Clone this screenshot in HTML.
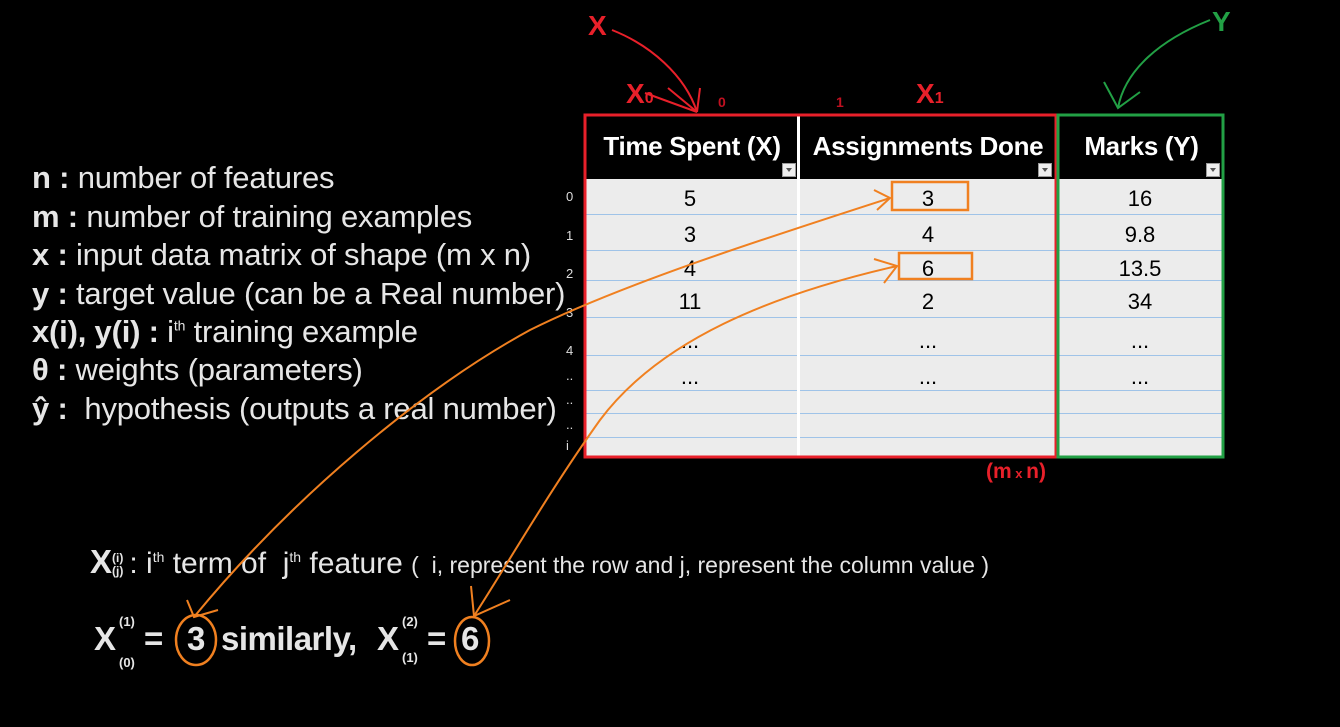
<!DOCTYPE html>
<html><head><meta charset="utf-8"><style>
body{margin:0;width:1340px;height:727px;background:#000;position:relative;overflow:hidden;font-family:"Liberation Sans",sans-serif;}
.a{position:absolute;white-space:nowrap}
.def{color:#e6e6e6;font-size:31px;left:32px;letter-spacing:-0.2px}
.def b{font-weight:bold}
.cell{position:absolute;font-size:22px;color:#000;text-align:center;font-family:"Liberation Sans",sans-serif}
.hd{position:absolute;color:#fff;font-weight:bold;font-size:26px;font-family:"Liberation Sans",sans-serif;text-align:center;letter-spacing:-0.3px}
.rn{position:absolute;left:566px;color:#ddd;font-size:13px}
.dd{position:absolute;width:14px;height:14px;background:#eee;border:1px solid #999;box-sizing:border-box}
.dd:after{content:"";position:absolute;left:3px;top:4px;border-left:3px solid transparent;border-right:3px solid transparent;border-top:4px solid #555}
</style></head><body>
<div class="a" style="left:586px;top:179px;width:637px;height:278px;background:#ececec"></div>
<div class="a" style="left:586px;top:116px;width:637px;height:63px;background:#000"></div>
<svg class="a" style="left:0;top:0" width="1340" height="727">
<g stroke="#9fc3e8" stroke-width="1">
<line x1="586" y1="214.5" x2="1223" y2="214.5"/><line x1="586" y1="250.5" x2="1223" y2="250.5"/>
<line x1="586" y1="280.5" x2="1223" y2="280.5"/><line x1="586" y1="317.5" x2="1223" y2="317.5"/>
<line x1="586" y1="355.5" x2="1223" y2="355.5"/><line x1="586" y1="390.5" x2="1223" y2="390.5"/>
<line x1="586" y1="413.5" x2="1223" y2="413.5"/><line x1="586" y1="437.5" x2="1223" y2="437.5"/>
</g>
<line x1="798.5" y1="116" x2="798.5" y2="457" stroke="#fff" stroke-width="3"/>
<rect x="585" y="115" width="471" height="342" fill="none" stroke="#e8202a" stroke-width="3"/>
<rect x="1058" y="115" width="165" height="342" fill="none" stroke="#22a045" stroke-width="3"/>
</svg>
<div class="hd" style="left:586px;top:131px;width:212px">Time Spent (X)</div>
<div class="hd" style="left:800px;top:131px;width:256px">Assignments Done</div>
<div class="hd" style="left:1060px;top:131px;width:163px">Marks (Y)</div>
<div class="dd" style="left:782px;top:163px"></div>
<div class="dd" style="left:1038px;top:163px"></div>
<div class="dd" style="left:1206px;top:163px"></div>

<div class="cell" style="left:590px;top:186px;width:200px">5</div>
<div class="cell" style="left:590px;top:222px;width:200px">3</div>
<div class="cell" style="left:590px;top:256px;width:200px">4</div>
<div class="cell" style="left:590px;top:289px;width:200px">11</div>
<div class="cell" style="left:590px;top:328px;width:200px">...</div>
<div class="cell" style="left:590px;top:364px;width:200px">...</div>
<div class="cell" style="left:828px;top:186px;width:200px">3</div>
<div class="cell" style="left:828px;top:222px;width:200px">4</div>
<div class="cell" style="left:828px;top:256px;width:200px">6</div>
<div class="cell" style="left:828px;top:289px;width:200px">2</div>
<div class="cell" style="left:828px;top:328px;width:200px">...</div>
<div class="cell" style="left:828px;top:364px;width:200px">...</div>
<div class="cell" style="left:1060px;top:186px;width:160px">16</div>
<div class="cell" style="left:1060px;top:222px;width:160px">9.8</div>
<div class="cell" style="left:1060px;top:256px;width:160px">13.5</div>
<div class="cell" style="left:1060px;top:289px;width:160px">34</div>
<div class="cell" style="left:1060px;top:328px;width:160px">...</div>
<div class="cell" style="left:1060px;top:364px;width:160px">...</div>

<div class="rn" style="top:189px">0</div><div class="rn" style="top:228px">1</div>
<div class="rn" style="top:266px">2</div><div class="rn" style="top:305px">3</div>
<div class="rn" style="top:343px">4</div><div class="rn" style="top:368px">..</div>
<div class="rn" style="top:392px">..</div><div class="rn" style="top:417px">..</div>
<div class="rn" style="top:438px">i</div>

<div class="a def" style="top:160px"><b>n :</b> number of features</div>
<div class="a def" style="top:199px"><b>m :</b> number of training examples</div>
<div class="a def" style="top:237px"><b>x :</b> input data matrix of shape (m x n)</div>
<div class="a def" style="top:276px"><b>y :</b> target value (can be a Real number)</div>
<div class="a def" style="top:314px"><b>x(i), y(i) :</b> i<sup style="font-size:14px">th</sup> training example</div>
<div class="a def" style="top:352px"><b>θ :</b> weights (parameters)</div>
<div class="a def" style="top:391px"><b>ŷ :</b>&nbsp; hypothesis (outputs a real number)</div>

<div class="a" style="left:588px;top:10px;color:#e8202a;font-weight:bold;font-size:28px">X</div>
<div class="a" style="left:1212px;top:6px;color:#22a045;font-weight:bold;font-size:28px">Y</div>
<div class="a" style="left:626px;top:78px;color:#e8202a;font-weight:bold;font-size:28px">X<span style="font-size:16px">0</span></div>
<div class="a" style="left:916px;top:78px;color:#e8202a;font-weight:bold;font-size:28px">X<span style="font-size:16px">1</span></div>
<div class="a" style="left:718px;top:94px;color:#c01020;font-weight:bold;font-size:14px">0</div>
<div class="a" style="left:836px;top:94px;color:#c01020;font-weight:bold;font-size:14px">1</div>
<div class="a" style="left:986px;top:460px;color:#e8202a;font-weight:bold;font-size:21px">(m<span style="font-size:13px"> x </span>n)</div>

<div class="a" style="left:90px;top:543px;color:#e6e6e6;font-size:30px"><b style="font-size:33px">X</b><span style="display:inline-block;vertical-align:middle;font-size:12px;line-height:13px;margin-right:6px"><b>(i)<br>(j)</b></span>: i<sup style="font-size:14px">th</sup> term of&nbsp; j<sup style="font-size:14px">th</sup> feature <span style="font-size:23px">(&nbsp; i, represent the row and j, represent the column value )</span></div>
<div class="a" style="left:94px;top:620px;color:#e6e6e6;font-size:33px;font-weight:bold">X</div>
<div class="a" style="left:119px;top:614px;color:#e6e6e6;font-size:13px;font-weight:bold">(1)</div>
<div class="a" style="left:119px;top:655px;color:#e6e6e6;font-size:13px;font-weight:bold">(0)</div>
<div class="a" style="left:144px;top:620px;color:#e6e6e6;font-size:33px;font-weight:bold">=</div>
<div class="a" style="left:187px;top:620px;color:#e6e6e6;font-size:33px;font-weight:bold">3</div>
<div class="a" style="left:221px;top:620px;color:#e6e6e6;font-size:33px;font-weight:bold;letter-spacing:-0.5px">similarly,</div>
<div class="a" style="left:377px;top:620px;color:#e6e6e6;font-size:33px;font-weight:bold">X</div>
<div class="a" style="left:402px;top:614px;color:#e6e6e6;font-size:13px;font-weight:bold">(2)</div>
<div class="a" style="left:402px;top:650px;color:#e6e6e6;font-size:13px;font-weight:bold">(1)</div>
<div class="a" style="left:427px;top:620px;color:#e6e6e6;font-size:33px;font-weight:bold">=</div>
<div class="a" style="left:461px;top:620px;color:#e6e6e6;font-size:33px;font-weight:bold">6</div>

<svg class="a" style="left:0;top:0" width="1340" height="727" fill="none">
<g stroke="#f08020" stroke-width="2.5">
<rect x="892" y="182" width="76" height="28"/>
<rect x="899" y="253" width="73" height="26"/>
<ellipse cx="196" cy="640" rx="20" ry="25"/>
<ellipse cx="472" cy="641" rx="17" ry="24"/>
</g>
<g stroke="#f08020" stroke-width="2">
<path d="M890 198 C760 240 620 285 530 330 C420 390 290 500 194 617"/>
<path d="M187 600 L194 617 L218 610"/>
<path d="M874 190 L890 198 L877 210"/>
<path d="M897 266 C770 295 660 340 600 420 C550 490 510 560 474 616"/>
<path d="M471 586 L474 616 L510 600"/>
<path d="M874 259 L897 266 L884 283"/>
</g>
<g stroke="#e8202a" stroke-width="2">
<path d="M612 30 C650 45 685 75 697 112"/><path d="M645 93 L697 112 L668 88"/><path d="M697 112 L700 88"/>
</g>
<g stroke="#22a045" stroke-width="2">
<path d="M1210 20 C1160 40 1125 70 1118 108"/><path d="M1104 82 L1118 108 L1140 92"/>
</g>
</svg>
</body></html>
